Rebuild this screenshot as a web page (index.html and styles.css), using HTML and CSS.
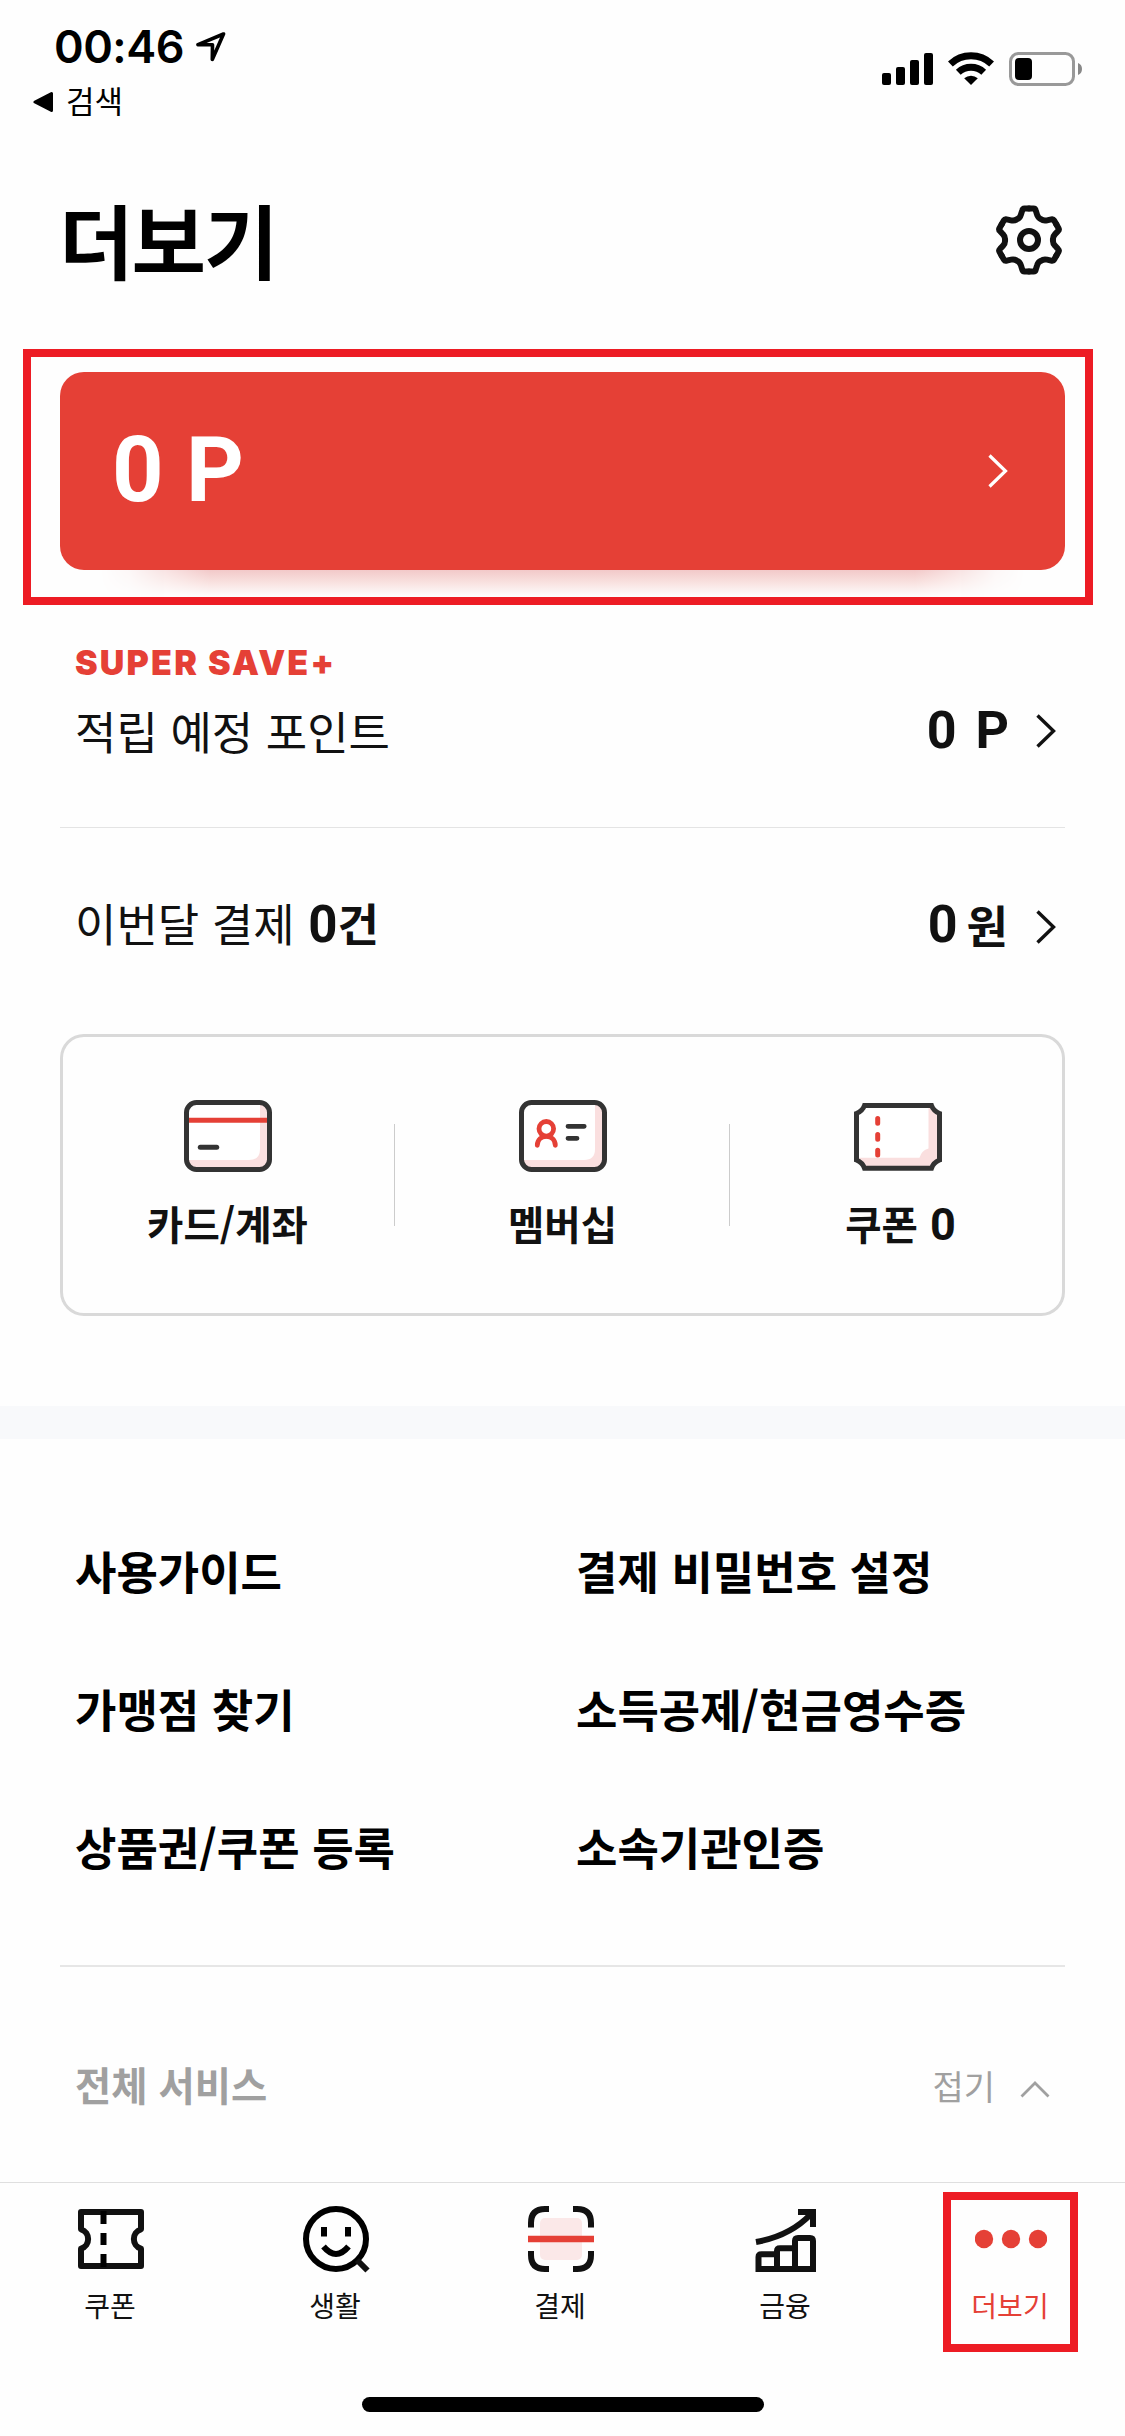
FILE: index.html
```html
<!DOCTYPE html>
<html lang="ko">
<head>
<meta charset="utf-8">
<title>더보기</title>
<link rel="stylesheet" href="styles.css">
</head>
<body>
<div class="screen">
  <div class="status">
    <div class="status-left">
      <div class="time-row">
        <span class="time">00:46</span>
        <svg class="location" width="30" height="32" viewBox="0 0 30 32"><path d="M27.5 3 2 13.7H16.5L16.3 28.5Z" fill="none" stroke="#000" stroke-width="3.6" stroke-linejoin="round"/></svg>
      </div>
      <div class="back-row">
        <svg width="21" height="22" viewBox="0 0 21 22"><path d="M2 11 18.5 2.5V19.5Z" stroke="#000" stroke-width="3" stroke-linejoin="round"/></svg>
        <span class="back-label">검색</span>
      </div>
    </div>
    <div class="status-right">
      <svg width="51" height="34" viewBox="0 0 51 34"><rect y="21" width="9" height="12" rx="2"/><rect x="14" y="15" width="9" height="18" rx="2"/><rect x="28" y="8" width="9" height="25" rx="2"/><rect x="42" y="1" width="9" height="32" rx="2"/></svg>
      <svg width="46" height="34" viewBox="0 0 46 34"><g fill="none" stroke="#000" stroke-width="7"><path d="M2.4 12A30 30 0 0 1 43.6 12"/><path d="M10.3 20.3A18.7 18.7 0 0 1 35.7 20.3"/></g><path d="M16.2 26.2A10.5 10.5 0 0 1 29.8 26.2L23 33Z"/></svg>
      <svg width="74" height="34" viewBox="0 0 74 34"><rect x="1.5" y="1.5" width="63" height="31" rx="8" fill="none" stroke="#999" stroke-width="3"/><rect x="6" y="6" width="17" height="22" rx="4"/><path d="M69 11Q73 12.5 73 17T69 23Z" fill="#888"/></svg>
    </div>
  </div>

  <header class="header">
    <h1 class="title">더보기</h1>
    <svg width="68" height="70" viewBox="-34 -35 68 70" fill="none" stroke="#111" stroke-width="6" stroke-linecap="round">
      <defs><path id="cog" d="M0 -31.5H4.5Q6.3 -31.5 6.8 -29.5L8 -25.5Q9 -22 12 -20.8Q14.5 -18.8 18.1 -19.7L22.1 -20.6Q24.1 -21.2 25 -19.7L27.3 -15.75"/></defs>
      <use href="#cog"/><use href="#cog" transform="rotate(60)"/><use href="#cog" transform="rotate(120)"/><use href="#cog" transform="rotate(180)"/><use href="#cog" transform="rotate(240)"/><use href="#cog" transform="rotate(300)"/>
      <circle r="9"/>
    </svg>
  </header>

  <div class="highlight">
    <div class="point-card">
      <span class="point">0 P</span>
      <svg width="22" height="36" viewBox="0 0 22 36"><path d="M2.5 2.5 18.5 18 2.5 33.5" fill="none" stroke="#fff" stroke-width="3.2"/></svg>
    </div>
  </div>

  <section class="saving">
    <div class="brand">SUPER SAVE+</div>
    <div class="row">
      <span class="row-label">적립 예정 포인트</span>
      <span class="value wide">0 P</span>
      <svg class="chev" width="22" height="36" viewBox="0 0 22 36"><path d="M2.5 2.5 18.5 18 2.5 33.5" fill="none" stroke="#111" stroke-width="3.4"/></svg>
    </div>
  </section>

  <section class="month row">
    <span class="row-label">이번달 결제 <b><span class="count">0</span>건</b></span>
    <span class="value won">0<span class="unit">원</span></span>
    <svg class="chev low" width="22" height="36" viewBox="0 0 22 36"><path d="M2.5 2.5 18.5 18 2.5 33.5" fill="none" stroke="#111" stroke-width="3.4"/></svg>
  </section>

  <section class="wallet">
    <div class="wallet-item">
      <svg width="88" height="72" viewBox="0 0 88 72"><rect x="2.5" y="2.5" width="83" height="67" rx="10" fill="#fadfdf"/><path d="M5 5H76V49Q76 60 65 60H5Z" fill="#fff"/><path d="M5 20.3H83" stroke="#e54036" stroke-width="5"/><rect x="2.5" y="2.5" width="83" height="67" rx="10" fill="none" stroke="#333" stroke-width="5"/><path d="M16.3 47.3H32.7" stroke="#333" stroke-width="5" stroke-linecap="round"/></svg>
      <span class="wallet-label">카드/계좌</span>
    </div>
    <div class="wallet-item">
      <svg width="88" height="72" viewBox="0 0 88 72"><rect x="2.5" y="2.5" width="83" height="67" rx="10" fill="#fadfdf"/><path d="M5 5H76V49Q76 60 65 60H5Z" fill="#fff"/><rect x="2.5" y="2.5" width="83" height="67" rx="10" fill="none" stroke="#333" stroke-width="5"/><g fill="none" stroke="#e54036" stroke-width="4.8" stroke-linecap="round"><circle cx="27.3" cy="28.8" r="7.3"/><path d="M18.3 45.3C18.6 33.5 36 33.5 36.3 45.3"/></g><path d="M49 26.3H65.2M49 38.3H58" stroke="#333" stroke-width="4.8" stroke-linecap="round"/></svg>
      <span class="wallet-label">멤버십</span>
    </div>
    <div class="wallet-item">
      <svg width="88" height="72" viewBox="0 -3 88 72"><path d="M10.5 2.5H77.5Q79.5 8 85.5 10.5V57Q79.5 59.5 77.5 65.2H10.5Q8.5 59.5 2.5 57V10.5Q8.5 8 10.5 2.5Z" fill="#fadfdf"/><path d="M10 4H74.5V45.5Q67.5 47.5 65.5 54.8H5V10Z" fill="#fff"/><path d="M10.5 2.5H77.5Q79.5 8 85.5 10.5V57Q79.5 59.5 77.5 65.2H10.5Q8.5 59.5 2.5 57V10.5Q8.5 8 10.5 2.5Z" fill="none" stroke="#333" stroke-width="5"/><path d="M23.7 15.5V20.3M23.7 31.5V36.3M23.7 47.2V52" stroke="#e54036" stroke-width="5" stroke-linecap="round"/></svg>
      <span class="wallet-label coupon-label">쿠폰 <span class="coupon-count">0</span></span>
    </div>
  </section>

  <div class="band"></div>

  <nav class="menu">
    <span>사용가이드</span><span>결제 비밀번호 설정</span>
    <span>가맹점 찾기</span><span>소득공제/현금영수증</span>
    <span>상품권/쿠폰 등록</span><span>소속기관인증</span>
  </nav>

  <div class="services">
    <span class="services-title">전체 서비스</span>
    <span class="fold">접기</span>
    <svg width="30" height="18" viewBox="0 0 30 18"><path d="M1.5 16.5 15 3 28.5 16.5" fill="none" stroke="#a0a0a0" stroke-width="2.8"/></svg>
  </div>

  <footer class="tabbar">
    <div class="tabs">
      <div class="tab">
        <svg width="72" height="72" viewBox="0 0 72 72" fill="none" stroke="#111" stroke-width="6"><path stroke-linejoin="round" d="M6 9H66V26.3C56.5 29 56.5 43 66 45.7V63H6V45.7C15.5 43 15.5 29 6 26.3Z"/><path stroke="#000" d="M28.5 8V21M28.5 30V42M28.5 51V64"/></svg>
        <span class="tab-label">쿠폰</span>
      </div>
      <div class="tab">
        <svg width="72" height="72" viewBox="0 0 72 72" fill="none" stroke="#000" stroke-width="6"><circle cx="36" cy="36" r="30"/><path d="M24 24V33.4M48 24V33.4"/><path d="M23.5 43.5Q36 58.5 48.5 43.5"/><path stroke="#111" d="M57 57 67.5 67.5"/></svg>
        <span class="tab-label">생활</span>
      </div>
      <div class="tab">
        <svg width="72" height="72" viewBox="0 0 72 72"><rect x="15" y="15" width="42" height="42" rx="5" fill="#fbe8e8"/><path fill="none" stroke="#111" stroke-width="6" d="M6 24.5V20Q6 6 20 6H24M48 6H52Q66 6 66 20V24.5M66 48V52Q66 66 52 66H48M24 66H20Q6 66 6 52V48"/><path d="M3 36H69" stroke="#e54036" stroke-width="6.5"/></svg>
        <span class="tab-label">결제</span>
      </div>
      <div class="tab">
        <svg width="72" height="72" viewBox="0 0 72 72" fill="none" stroke="#111" stroke-width="6"><path d="M8.5 66V54Q8.5 51.3 11.5 51.3H27M27 66V48Q27 45.3 30 45.3H45M45 66V38Q45 35 48 35H60Q63 35 63 38V66M5.5 66H66"/><path d="M6 39Q40 33 61 11M48 9H63V24"/></svg>
        <span class="tab-label">금융</span>
      </div>
      <div class="tab active">
        <svg width="72" height="72" viewBox="0 0 72 72" fill="#e54036"><circle cx="9" cy="36" r="9.2"/><circle cx="36" cy="36" r="9.2"/><circle cx="63" cy="36" r="9.2"/></svg>
        <span class="tab-label">더보기</span>
        <span class="tab-frame"></span>
      </div>
    </div>
    <div class="home-bar"></div>
  </footer>
</div>
</body>
</html>
```

FILE: styles.css
```css
* { box-sizing: border-box; }
body {
  margin: 0;
  background: #fefefe;
  color: #111;
  font-family: "Noto Sans CJK KR", sans-serif;
}
svg { display: block; flex: none; }
.screen {
  width: 1125px;
  height: 2436px;
  overflow: hidden;
}

.status {
  display: flex;
  justify-content: space-between;
  height: 180px;
  padding: 23px 42px 0 33px;
  color: #000;
}
.time-row {
  display: flex;
  align-items: center;
  gap: 12px;
  height: 48px;
  padding-left: 21px;
}
.time {
  font: 600 45px/48px Inter, sans-serif;
  letter-spacing: -0.5px;
}
.back-row {
  display: flex;
  align-items: center;
  gap: 12px;
  height: 40px;
  margin-top: 9px;
}
.back-row svg { margin-top: 4px; }
.back-label { font-size: 31px; line-height: 40px; }
.status-right {
  display: flex;
  align-items: flex-start;
  gap: 15px;
  padding-top: 29px;
}

.header {
  display: flex;
  align-items: center;
  justify-content: space-between;
  height: 120px;
  padding: 0 62px 0 59px;
}
.title {
  margin: 0;
  padding-bottom: 4px;
  color: #000;
  font-size: 81px;
  font-weight: 700;
  line-height: 110px;
  letter-spacing: -2px;
}

.highlight {
  height: 256px;
  margin: 49px 32px 0 23px;
  padding: 15px 20px 27px 29px;
  border: 8px solid #ed1c24;
  isolation: isolate;
}
.point-card {
  position: relative;
  display: flex;
  align-items: center;
  justify-content: space-between;
  height: 198px;
  padding: 0 56px 0 52px;
  border-radius: 24px;
  background: #e54036;
}
.point-card::after {
  content: "";
  position: absolute;
  z-index: -1;
  left: 40px;
  right: 40px;
  bottom: -27px;
  height: 27px;
  background: linear-gradient(#f2c9c9, #f8dedc 40%, #fefefe);
  -webkit-mask-image: linear-gradient(90deg, transparent, #0002 30px, #000 110px, #000 calc(100% - 110px), #0002 calc(100% - 30px), transparent);
  mask-image: linear-gradient(90deg, transparent, #0002 30px, #000 110px, #000 calc(100% - 110px), #0002 calc(100% - 30px), transparent);
}
.point {
  color: #fff;
  font: 700 90px/100px Roboto, sans-serif;
}

.saving {
  height: 223px;
  margin: 0 60px;
  padding-top: 38px;
  border-bottom: 1px solid #e4e4e4;
}
.brand {
  margin: 0 0 18px 15px;
  color: #e54036;
  font: 900 34px/40px Inter, sans-serif;
  letter-spacing: 2.2px;
}
.row {
  display: flex;
  align-items: center;
  height: 60px;
  padding: 0 8px 0 15px;
}
.row-label {
  flex: 1;
  font-size: 45px;
  font-weight: 400;
  line-height: 60px;
}
.row-label b { font-weight: 700; }
.count {
  margin-left: 1px;
  font: 700 51px/50px Roboto, sans-serif;
}
.value {
  font: 700 52px/60px Roboto, sans-serif;
}
.wide { word-spacing: 6px; }
.won { display: flex; padding-top: 3px; }
.unit {
  margin-left: 9px;
  font: 700 45px/60px "Noto Sans CJK KR", sans-serif;
}
.chev { margin-left: 26px; }
.won + .chev { margin-left: 27px; }
.low { margin-top: 8px; }
.month { margin: 65px 60px 0; }

.wallet {
  display: grid;
  grid-template-columns: repeat(3, 335px);
  height: 282px;
  margin: 81px 60px 0;
  border-radius: 24px;
  box-shadow: inset 0 0 0 3px #d9d9d9;
}
.wallet-item {
  display: flex;
  flex-direction: column;
  align-items: center;
  gap: 26px;
  padding-top: 66px;
  background: linear-gradient(#ccc, #ccc) right 90px / 1px 102px no-repeat;
}
.wallet-item:last-child { background: none; }
.wallet-label {
  font-size: 39.5px;
  font-weight: 700;
  line-height: 50px;
}
.coupon-label { padding-left: 6px; }
.coupon-count {
  margin-left: 1px;
  font: 700 45px/40px Roboto, sans-serif;
}

.band {
  height: 33px;
  margin-top: 90px;
  background: #f8f9fb;
}

.menu {
  display: grid;
  grid-template-columns: 501px 1fr;
  row-gap: 78px;
  height: 528px;
  margin: 0 60px;
  padding: 102px 0 88px 15px;
  border-bottom: 2px solid #e6e6e6;
  color: #000;
  font-size: 45px;
  font-weight: 700;
  line-height: 60px;
}

.services {
  display: flex;
  align-items: center;
  height: 60px;
  margin: 87px 75px 0;
  color: #a0a0a0;
}
.services-title {
  flex: 1;
  font-size: 39.4px;
  font-weight: 700;
  line-height: 60px;
}
.fold {
  margin-right: 25px;
  padding-top: 3px;
  font-size: 34px;
  line-height: 60px;
}
.services svg { margin-top: 10px; }

.tabbar {
  height: 254px;
  margin-top: 68px;
  border-top: 1px solid #dfdfdf;
}
.tabs {
  display: grid;
  grid-template-columns: repeat(5, 225px);
  margin-left: -1.5px;
  padding-top: 20px;
}
.tab {
  position: relative;
  display: flex;
  flex-direction: column;
  align-items: center;
  gap: 10px;
}
.tab-label {
  padding-right: 2px;
  font-size: 28px;
  line-height: 40px;
}
.active { color: #e54036; }
.tab-frame {
  position: absolute;
  left: 44.5px;
  top: -11px;
  width: 135px;
  height: 160px;
  border: 8px solid #ed1c24;
}
.home-bar {
  width: 402px;
  height: 15px;
  margin: 72px 0 0 362px;
  border-radius: 8px;
  background: #000;
}
```
